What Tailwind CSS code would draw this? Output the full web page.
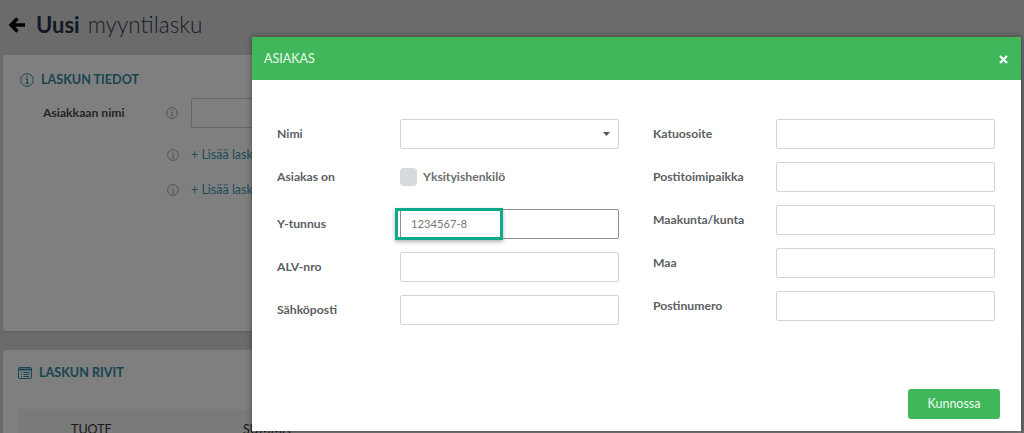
<!DOCTYPE html>
<html lang="en">
<head>
  <meta charset="UTF-8">
  <title>Uusi myyntilasku</title>
  <script src="https://cdn.jsdelivr.net/npm/@tailwindcss/browser@4"></script>
</head>
<body class="relative h-[433px] w-[1024px] overflow-hidden bg-[#d6d6d6] font-['Lato',sans-serif]">
  <!-- page behind the modal -->
  <div class="h-[433px] pl-[3px]">
    <div class="flex h-[55px] items-center pb-[5px] pl-[5px] text-[23px] leading-none">
      <svg class="mr-[10px] h-[18px] w-[18px]" viewBox="0 0 18 18" fill="none" stroke="#000" stroke-width="3.4"><path d="M17 9H3M9.5 2.5 3 9l6.5 6.5"/></svg>
      <span class="text-[22px] font-bold text-[#24304a]">Uusi</span>
      <span class="ml-[8px] text-[22.6px] font-light text-[#33384a]">myyntilasku</span>
    </div>
    <section class="h-[276px] w-[1018px] rounded-[3px] bg-white pl-[17px] pt-[15px] shadow-sm">
      <h2 class="flex items-center gap-[7px] text-[12.6px] font-bold leading-[20px] text-[#2f8aa0]">
        <svg class="h-[14px] w-[14px]" viewBox="0 0 14 14" fill="none" stroke="#2f8aa0" stroke-width="1"><circle cx="7" cy="7" r="6.3"/><path d="M5.8 6.2H7.3V10.2M5.6 10.4H8.8M6.6 3.6h1.2" stroke-width="1.2"/></svg>
        LASKUN TIEDOT
      </h2>
      <div class="mt-[8px] flex items-center">
        <span class="w-[143px] pl-[23px] text-[12.2px] font-bold text-[#4a4a4a]">Asiakkaan nimi</span>
        <svg class="mr-[13px] ml-[3px] h-[12px] w-[12px]" viewBox="0 0 14 14" fill="none" stroke="#999" stroke-width="1"><circle cx="7" cy="7" r="6.3"/><path d="M5.8 6.2H7.3V10.2M5.6 10.4H8.8M6.6 3.6h1.2"/></svg>
        <div class="h-[30px] w-[300px] rounded-[2px] border border-[#ccc] bg-white"></div>
      </div>
      <div class="mt-[18px] flex items-center pl-[146px] text-[12.5px] text-[#3a9ab0]">
        <svg class="mr-[12px] ml-[1px] h-[12px] w-[12px]" viewBox="0 0 14 14" fill="none" stroke="#999" stroke-width="1"><circle cx="7" cy="7" r="6.3"/><path d="M5.8 6.2H7.3V10.2M5.6 10.4H8.8M6.6 3.6h1.2"/></svg>
        + Lisää lasku
      </div>
      <div class="mt-[16px] flex items-center pl-[146px] text-[12.5px] text-[#3a9ab0]">
        <svg class="mr-[12px] ml-[1px] h-[12px] w-[12px]" viewBox="0 0 14 14" fill="none" stroke="#999" stroke-width="1"><circle cx="7" cy="7" r="6.3"/><path d="M5.8 6.2H7.3V10.2M5.6 10.4H8.8M6.6 3.6h1.2"/></svg>
        + Lisää lasku
      </div>
    </section>
    <section class="mt-[19px] h-[83px] w-[1018px] overflow-hidden rounded-t-[3px] bg-white pl-[15px] pt-[13px]">
      <h2 class="flex items-center gap-[7px] text-[12.6px] font-bold leading-[20px] text-[#2f8aa0]">
        <svg class="h-[12px] w-[14px]" viewBox="0 0 14 12" fill="none" stroke="#2f8aa0"><rect x=".5" y=".5" width="13" height="11" rx="1"/><path d="M.5 2.5h13" stroke-width="2"/><path d="M3 5.5h1M5.5 5.5h6M3 7.5h1M5.5 7.5h6M3 9.5h1M5.5 9.5h6"/></svg>
        LASKUN RIVIT
      </h2>
      <div class="mt-[26px] flex h-[40px] w-[985px] bg-[#f4f4f4] pl-[53px] pt-[12px] text-[12.5px] text-[#333]">
        <span class="w-[172px]">TUOTE</span><span>SUMMA</span>
      </div>
    </section>
  </div>

  <!-- dimmed backdrop -->
  <div class="absolute inset-0 bg-black/50"></div>

  <!-- modal -->
  <div class="absolute top-[37px] left-[252px] flex h-[394px] w-[769px] flex-col bg-white shadow-[0_0_6px_rgba(0,0,0,0.4)]">
    <header class="flex h-[43px] items-center justify-between bg-[#41b75b] pl-[12px] pr-[13px] text-white">
      <span class="mt-[2px] text-[12.5px] text-[#eaf7ec]">ASIAKAS</span>
      <svg class="mt-[2px] h-[9px] w-[9px]" viewBox="0 0 9 9" stroke="#fff" stroke-width="2.2"><path d="M1 1l7 7M8 1 1 8"/></svg>
    </header>
    <div class="grid flex-1 grid-cols-[376px_1fr] pl-[25px] pt-[39px] text-[12.2px] font-bold text-[#5b5e62]">
      <div class="flex flex-col">
        <div class="flex h-[30px] items-center">
          <span class="w-[123px]">Nimi</span>
          <div class="flex h-[30px] w-[219px] items-center justify-end rounded-[2px] border border-[#d4d4d4] pr-[8px]">
            <svg class="h-[4px] w-[7px]" viewBox="0 0 7 4" fill="#555"><path d="M0 0h7L3.5 4z"/></svg>
          </div>
        </div>
        <div class="mt-[13px] flex h-[30px] items-center">
          <span class="w-[123px]">Asiakas on</span>
          <span class="mr-[6px] h-[18px] w-[17px] rounded-[4px] bg-[#d5dadd]"></span>
          <span class="text-[#6a6d70]">Yksityishenkilö</span>
        </div>
        <div class="mt-[17px] flex h-[30px] items-center">
          <span class="w-[123px]">Y-tunnus</span>
          <div class="relative flex h-[30px] w-[219px] items-center rounded-[2px] border border-[#8c8c8c] pl-[10px] text-[11.2px] font-normal text-[#777]">
            1234567-8
            <span class="absolute top-[-2px] left-[-6px] h-[32px] w-[108px] border-[3px] border-[#0dab8c] shadow-[0_2px_4px_rgba(0,0,0,0.3)]"></span>
          </div>
        </div>
        <div class="mt-[13px] flex h-[30px] items-center">
          <span class="w-[123px]">ALV-nro</span>
          <div class="h-[30px] w-[219px] rounded-[2px] border border-[#d4d4d4]"></div>
        </div>
        <div class="mt-[13px] flex h-[30px] items-center">
          <span class="w-[123px]">Sähköposti</span>
          <div class="h-[30px] w-[219px] rounded-[2px] border border-[#d4d4d4]"></div>
        </div>
      </div>
      <div class="flex flex-col">
        <div class="flex h-[30px] items-center"><span class="w-[123px]">Katuosoite</span><div class="h-[30px] w-[219px] rounded-[2px] border border-[#d4d4d4]"></div></div>
        <div class="mt-[13px] flex h-[30px] items-center"><span class="w-[123px]">Postitoimipaikka</span><div class="h-[30px] w-[219px] rounded-[2px] border border-[#d4d4d4]"></div></div>
        <div class="mt-[13px] flex h-[30px] items-center"><span class="w-[123px]">Maakunta/kunta</span><div class="h-[30px] w-[219px] rounded-[2px] border border-[#d4d4d4]"></div></div>
        <div class="mt-[13px] flex h-[30px] items-center"><span class="w-[123px]">Maa</span><div class="h-[30px] w-[219px] rounded-[2px] border border-[#d4d4d4]"></div></div>
        <div class="mt-[13px] flex h-[30px] items-center"><span class="w-[123px]">Postinumero</span><div class="h-[30px] w-[219px] rounded-[2px] border border-[#d4d4d4]"></div></div>
      </div>
    </div>
    <footer class="flex justify-end pb-[12px] pr-[21px]">
      <button class="h-[30px] w-[92px] rounded-[3px] bg-[#41b75b] text-[12.5px] text-[#eef9f0]">Kunnossa</button>
    </footer>
  </div>
</body>
</html>
